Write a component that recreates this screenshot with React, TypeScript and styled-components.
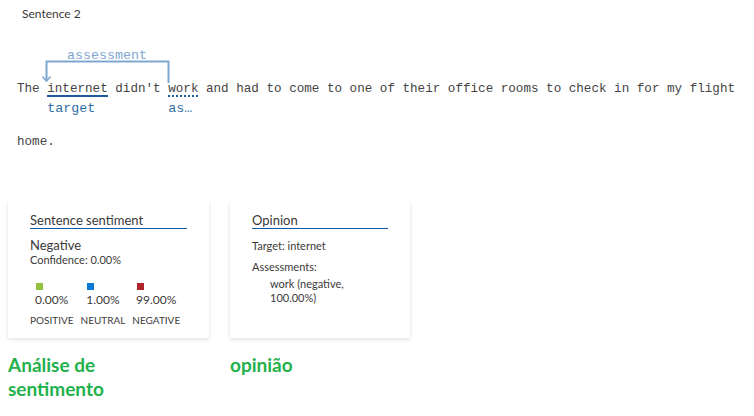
import React from "react";
import styled, { createGlobalStyle } from "styled-components";

const GlobalStyle = createGlobalStyle`
  html, body { margin: 0; padding: 0; background: #ffffff; }
  body { font-family: Lato, "Segoe UI", sans-serif; color: #3b3a39; }
`;

const Page = styled.div`
  width: 754px;
  height: 416px;
  overflow: hidden;
`;

const SentenceTitle = styled.div`
  padding: 6px 0 0 22px;
  font-size: 12px;
  line-height: 16px;
  color: #3b3a39;
`;

const SentenceText = styled.div`
  position: relative;
  margin: 41px 0 0 17px;
  width: 728px;
  font-family: "Liberation Mono", monospace;
  font-size: 12.6px;
  line-height: 53px;
  color: #444444;
`;

const Token = styled.span<{ $dotted?: boolean }>`
  position: relative;
  &::after {
    content: "";
    position: absolute;
    left: 0;
    right: 0;
    top: 13px;
    border-top: 2px ${(p) => (p.$dotted ? "dotted" : "solid")} #1b5a9c;
  }
`;

const TokenLabel = styled.span`
  position: absolute;
  left: 0;
  top: 19px;
  width: 100%;
  font-family: "Liberation Mono", monospace;
  font-size: 13.3px;
  line-height: 16px;
  color: #2f6eaa;
  white-space: nowrap;
  overflow: hidden;
  text-overflow: ellipsis;
`;

const Relation = styled.div`
  position: absolute;
  left: 23px;
  top: -15px;
  width: 134px;
  height: 38px;
  pointer-events: none;
`;

const RelationLabel = styled.div`
  position: absolute;
  left: 0;
  right: 0;
  top: 1px;
  text-align: center;
  font-family: "Liberation Mono", monospace;
  font-size: 13.3px;
  line-height: 14px;
  color: #7ea8d2;
`;

const RelationArrow = styled.svg`
  position: absolute;
  left: 0;
  top: 0;
`;

const Cards = styled.div`
  display: flex;
  gap: 21px;
  margin: 32px 0 0 8px;
`;

const Card = styled.div<{ $width: number }>`
  width: ${(p) => p.$width}px;
  height: 137px;
  box-sizing: border-box;
  padding: 11px 22px 10px 22px;
  background: #ffffff;
  box-shadow: 0 1.6px 3.6px rgba(0, 0, 0, 0.13), 0 0.3px 0.9px rgba(0, 0, 0, 0.11);
`;

const CardTitle = styled.div`
  font-size: 13px;
  line-height: 16px;
  color: #3b3a39;
  border-bottom: 1px solid #0f5aa6;
`;

const SentimentLabel = styled.div`
  margin-top: 8px;
  font-size: 13px;
  line-height: 16px;
  color: #3b3a39;
`;

const SmallLine = styled.div<{ $top?: number; $indent?: number; $max?: number }>`
  margin-top: ${(p) => p.$top ?? 0}px;
  padding-left: ${(p) => p.$indent ?? 0}px;
  max-width: ${(p) => (p.$max ? `${p.$max}px` : "none")};
  font-size: 11px;
  line-height: 14px;
  color: #3b3a39;
`;

const Scores = styled.div`
  display: flex;
  gap: 7px;
  margin-top: 16px;
`;

const ScoreColumn = styled.div`
  display: flex;
  flex-direction: column;
  align-items: center;
`;

const ScoreValue = styled.div`
  display: flex;
  flex-direction: column;
  align-items: flex-start;
`;

const Swatch = styled.span<{ $color: string }>`
  display: block;
  width: 7px;
  height: 7px;
  margin-left: 1px;
  background: ${(p) => p.$color};
`;

const Percent = styled.span`
  margin-top: 2px;
  font-size: 12px;
  line-height: 16px;
  color: #3b3a39;
`;

const ScoreName = styled.span`
  margin-top: 5px;
  font-size: 10px;
  line-height: 14px;
  color: #3b3a39;
`;

const Captions = styled.div`
  display: grid;
  grid-template-columns: 201px 180px;
  column-gap: 21px;
  margin: 15px 0 0 8px;
`;

const Caption = styled.div`
  max-width: 140px;
  font-size: 19px;
  line-height: 24px;
  font-weight: 700;
  color: #22b14c;
`;

const scores = [
  { color: "#92c13e", value: "0.00%", name: "POSITIVE" },
  { color: "#0a78d4", value: "1.00%", name: "NEUTRAL" },
  { color: "#b0242b", value: "99.00%", name: "NEGATIVE" },
];

export default function App() {
  return (
    <Page>
      <GlobalStyle />
      <SentenceTitle>Sentence 2</SentenceTitle>
      <SentenceText>
        <Relation>
          <RelationLabel>assessment</RelationLabel>
          <RelationArrow width="134" height="38" viewBox="0 0 134 38">
            <path
              d="M6.5 33 V13.5 H128.5 V35"
              fill="none"
              stroke="#7ea8d2"
              strokeWidth="2"
            />
            <path
              d="M2.5 28.5 L6.5 33 L10.5 28.5"
              fill="none"
              stroke="#7ea8d2"
              strokeWidth="1.6"
            />
          </RelationArrow>
        </Relation>
        The{" "}
        <Token>
          internet
          <TokenLabel>target</TokenLabel>
        </Token>{" "}
        didn't{" "}
        <Token $dotted>
          work
          <TokenLabel>assessment</TokenLabel>
        </Token>{" "}
        and had to come to one of their office rooms to check in for my flight home.
      </SentenceText>
      <Cards>
        <Card $width={201}>
          <CardTitle>Sentence sentiment</CardTitle>
          <SentimentLabel>Negative</SentimentLabel>
          <SmallLine>Confidence: 0.00%</SmallLine>
          <Scores>
            {scores.map((s) => (
              <ScoreColumn key={s.name}>
                <ScoreValue>
                  <Swatch $color={s.color} />
                  <Percent>{s.value}</Percent>
                </ScoreValue>
                <ScoreName>{s.name}</ScoreName>
              </ScoreColumn>
            ))}
          </Scores>
        </Card>
        <Card $width={180}>
          <CardTitle>Opinion</CardTitle>
          <SmallLine $top={10}>Target: internet</SmallLine>
          <SmallLine $top={7}>Assessments:</SmallLine>
          <SmallLine $top={3} $indent={18} $max={100}>
            work (negative, 100.00%)
          </SmallLine>
        </Card>
      </Cards>
      <Captions>
        <Caption>Análise de sentimento</Caption>
        <Caption>opinião</Caption>
      </Captions>
    </Page>
  );
}
